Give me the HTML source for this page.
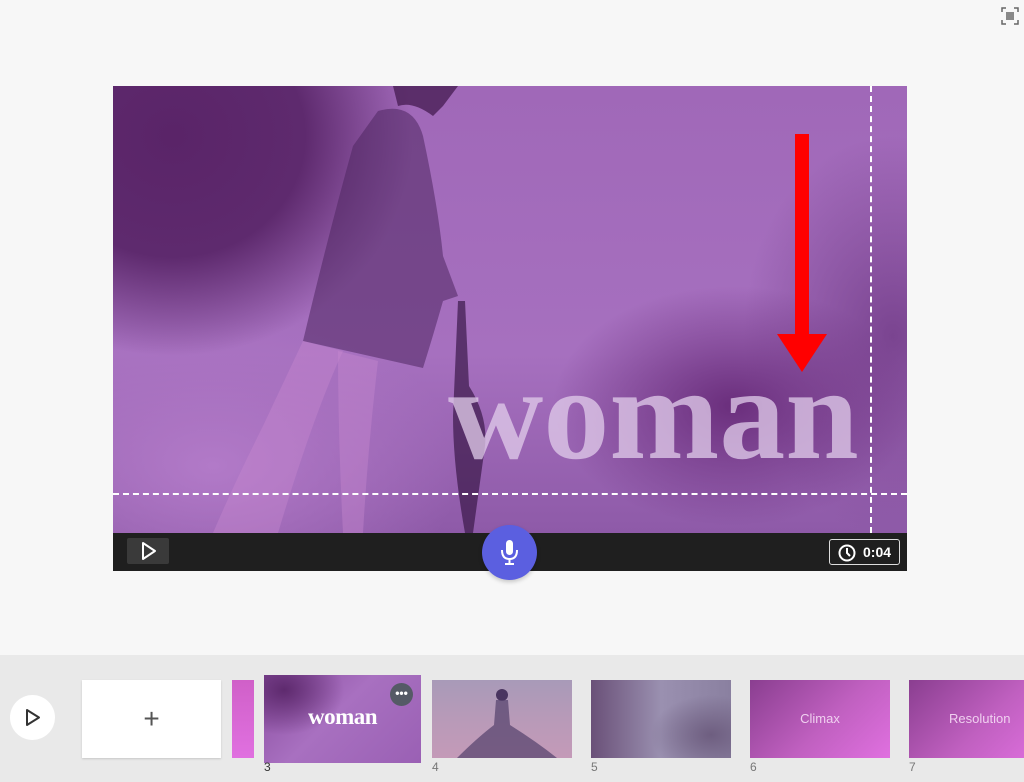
<!DOCTYPE html>
<html><head><meta charset="utf-8"><style>
*{margin:0;padding:0;box-sizing:border-box}
body{width:1024px;height:782px;background:#f7f7f7;font-family:"Liberation Sans",sans-serif;position:relative;overflow:hidden}
.stage{position:absolute;left:113px;top:86px;width:794px;height:447px;overflow:hidden;
background:radial-gradient(ellipse 240px 220px at 60px 50px,#5a2468 0%,#5e2a6e 55%,transparent 100%),radial-gradient(ellipse 180px 120px at 620px 320px,#6a2e7c 0%,transparent 100%),radial-gradient(ellipse 150px 200px at 780px 250px,#7a4490 0%,transparent 100%),radial-gradient(ellipse 250px 150px at 100px 380px,#b27ac8 0%,transparent 100%),linear-gradient(180deg,#a068b8 0%,#a670bf 60%,#8e5aa8 100%)}
.bar{position:absolute;left:113px;top:533px;width:794px;height:38px;background:#1f1f1f}
.woman{position:absolute;left:335px;top:262px;font-family:"Liberation Serif",serif;font-weight:bold;font-size:132px;line-height:1;color:rgba(225,205,235,.75);letter-spacing:0px}
.dash{position:absolute;border-color:#fff;border-style:dashed}
.strip{position:absolute;left:0;top:655px;width:1024px;height:127px;background:#e9e9e9}
.th{position:absolute;top:680px;height:78px}
.num{position:absolute;top:760px;font-size:12px;color:#777}
</style></head><body>
<svg style="position:absolute;left:1001px;top:7px" width="18" height="18" viewBox="0 0 18 18" fill="none" stroke="#666" stroke-width="1.5"><path d="M1 5V1h4M13 1h4v4M17 13v4h-4M5 17H1v-4"/><rect x="5" y="5" width="8" height="8" fill="#888" stroke="none"/></svg>
<div class="stage">
<svg width="794" height="447" style="position:absolute;left:0;top:0">
<path d="M280 0 L345 0 L330 20 L320 30 Q300 15 285 20 Z" fill="#4a1f56" opacity=".8"/>
<path d="M265 25 Q300 15 310 50 Q325 120 330 170 L345 210 L330 215 Q320 250 310 282 L190 255 Q215 150 240 60 Z" fill="#4f2660" opacity=".55"/>
<path d="M190 255 L230 265 Q200 330 165 447 L100 447 Q120 400 150 340 Z" fill="#c88ad0" opacity=".4"/>
<path d="M225 265 L265 275 Q255 360 250 447 L230 447 Q225 350 225 265Z" fill="#c88ad0" opacity=".4"/>
<path d="M345 215 L352 215 L356 300 Q375 330 372 360 L360 447 L352 447 Q340 380 340 330 Z" fill="#3a1848" opacity=".7"/>
</svg>
<div class="woman">woman</div>
<div class="dash" style="left:757px;top:0;height:447px;border-left-width:2px;border-top:0;border-right:0;border-bottom:0"></div>
<div class="dash" style="left:0;top:407px;width:794px;border-top-width:2px;border-left:0;border-right:0;border-bottom:0"></div>
<svg style="position:absolute;left:664px;top:48px" width="50" height="238"><rect x="18" y="0" width="14" height="200" fill="#f00"/><path d="M0 200 L50 200 L25 238Z" fill="#f00"/></svg>
</div>
<div class="bar">
<div style="position:absolute;left:14px;top:5px;width:42px;height:26px;background:#3a3a3a;border-radius:2px"><svg width="42" height="26"><path d="M16 5 L28 13 L16 21 Z" fill="none" stroke="#fff" stroke-width="2" stroke-linejoin="round"/></svg></div>
<div style="position:absolute;right:7px;top:6px;width:71px;height:26px;border:1px solid #ddd;border-radius:3px;color:#fff;font-size:14px;font-weight:bold;line-height:24px;padding-left:33px">0:04<svg style="position:absolute;left:8px;top:4px" width="18" height="18" fill="none" stroke="#fff" stroke-width="2"><circle cx="9" cy="9" r="7.5"/><path d="M9 4v5l3 3"/></svg></div>
</div>
<div style="position:absolute;left:482px;top:525px;width:55px;height:55px;border-radius:50%;background:#5b5fe0;box-shadow:0 2px 4px rgba(0,0,0,.2)"><svg width="55" height="55"><rect x="24" y="15" width="7" height="15" rx="3.5" fill="#fff"/><path d="M20 25 Q20 34 27.5 34 Q35 34 35 25" fill="none" stroke="#fff" stroke-width="2"/><path d="M27.5 34v5M23 39h9" stroke="#fff" stroke-width="2"/></svg></div>
<div class="strip"></div>
<div style="position:absolute;left:10px;top:695px;width:45px;height:45px;border-radius:50%;background:#fff"><svg width="45" height="45"><path d="M17 15 L29 22.5 L17 30 Z" fill="none" stroke="#333" stroke-width="2" stroke-linejoin="round"/></svg></div>
<div class="th" style="left:82px;width:139px;background:#fff;box-shadow:0 1px 2px rgba(0,0,0,.15);text-align:center;font-size:28px;line-height:78px;color:#555;font-weight:300">+</div>
<div class="th" style="left:232px;width:22px;background:linear-gradient(#d060c8,#e070e0)"></div>
<div class="th" style="left:264px;top:675px;width:157px;height:88px;background:radial-gradient(ellipse 60px 45px at 20px 15px,#5e2a6e,transparent),linear-gradient(135deg,#8a4ea0,#a870c0 45%,#9a60b4)">
<div style="position:absolute;left:0;width:157px;top:29px;text-align:center;font-family:'Liberation Serif',serif;font-weight:bold;font-size:23px;color:#fff;letter-spacing:-0.5px">woman</div>
<div style="position:absolute;right:8px;top:8px;width:23px;height:23px;border-radius:50%;background:#555a66;color:#fff;font-size:12px;text-align:center;line-height:20px;font-weight:bold">•••</div></div>
<div class="num" style="left:264px;color:#333">3</div>
<div class="th" style="left:432px;width:140px;background:linear-gradient(180deg,#a89ab8,#b89ab8 50%,#c49ab8)"><svg width="140" height="78"><circle cx="70" cy="15" r="6" fill="#4a3560"/><path d="M64 20 L76 20 L78 45 Q105 62 125 78 L25 78 Q45 58 62 45 Z" fill="#5a4570" opacity=".75"/></svg></div>
<div class="num" style="left:432px">4</div>
<div class="th" style="left:591px;width:140px;background:radial-gradient(ellipse 60px 40px at 120px 55px,#6e5e80,transparent),linear-gradient(90deg,#6a5078,#9a90b0 50%,#8a80a0)"></div>
<div class="num" style="left:591px">5</div>
<div class="th" style="left:750px;width:140px;background:linear-gradient(135deg,#8a3e90,#c060c0 55%,#e070e0);color:#f0d0f0;font-size:13px;text-align:center;line-height:78px">Climax</div>
<div class="num" style="left:750px">6</div>
<div class="th" style="left:909px;width:140px;background:linear-gradient(135deg,#8a3e90,#c060c0 55%,#e070e0);color:#f0d0f0;font-size:13px;line-height:78px;padding-left:40px">Resolution</div>
<div class="num" style="left:909px">7</div>
</body></html>
